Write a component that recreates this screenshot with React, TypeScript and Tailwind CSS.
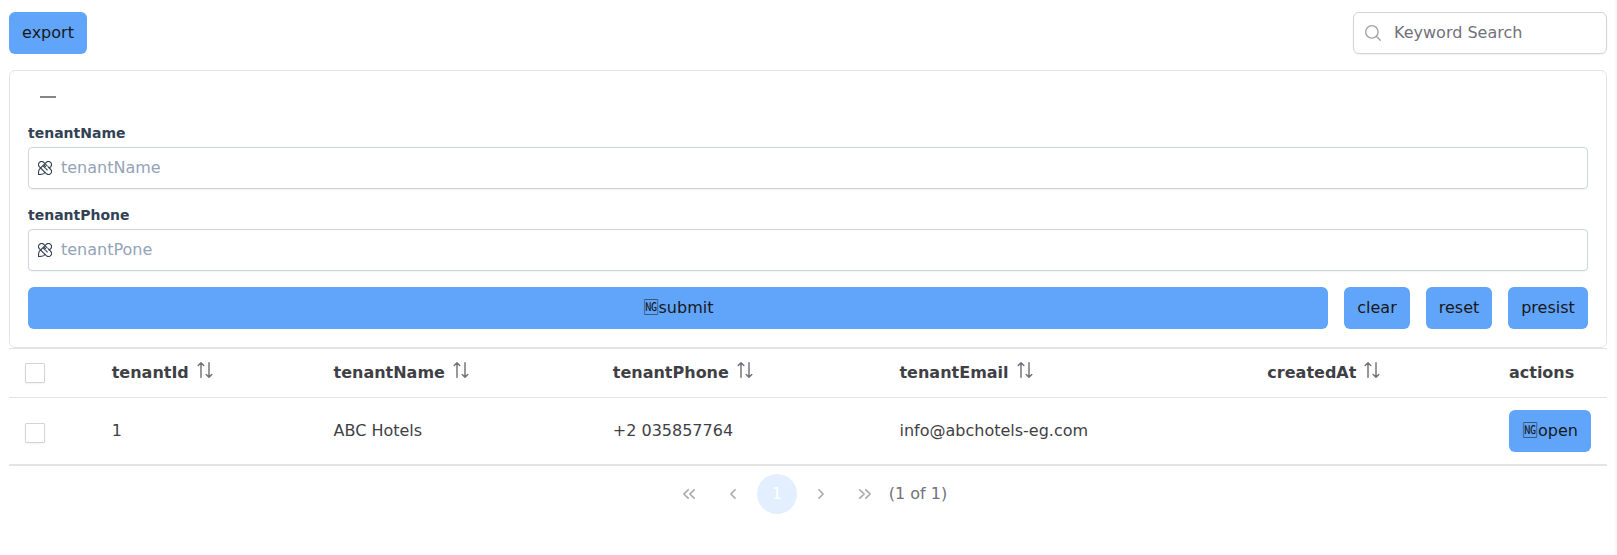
import React from 'react';

const Search = () => (
  <svg className="size-4 text-[#a1a1aa]" viewBox="0 0 14 14" fill="none" stroke="currentColor" strokeWidth="1.2" strokeLinecap="round">
    <circle cx="6.02" cy="6.02" r="5.42" />
    <path d="M9.9 9.9L13.4 13.4" />
  </svg>
);

const Sort = () => (
  <svg className="block size-4 shrink-0 text-[#71717a]" viewBox="0 0 16 16" fill="none" stroke="currentColor" strokeWidth="1.45" strokeLinecap="round" strokeLinejoin="round">
    <path d="M4 15.3V0.8M1.2 3.6L4 0.8L6.8 3.6M12 0.8V15.3M9.2 12.4L12 15.2L14.8 12.4" />
  </svg>
);

const Bandage = () => (
  <svg className="size-3.5 shrink-0 text-[#334155]" viewBox="0 0 14 14" fill="none" stroke="currentColor" strokeWidth="1.1" strokeLinecap="round" strokeLinejoin="round">
    <path d="M7 2.6L5.69 1.31A3.1 3.1 0 0 0 1.31 5.69L2.6 7L1.31 8.31C0.5 9.2 0.5 10 0.5 13.5C4 13.5 4.8 13.5 5.69 12.69L7 11.4L8.31 12.69A3.1 3.1 0 0 0 12.69 8.31L11.4 7L12.69 5.69A3.1 3.1 0 0 0 8.31 1.31Z" />
    <path d="M2.6 7L7 11.4M7 2.6L9 4.6M10 5.6L11.4 7M4.9 4.7L7 6.8M7.9 7.7L9.2 9M7 2.6L4.9 4.7L2.6 7M6.2 4.2L7.6 5.6" />
  </svg>
);

const Chevron = ({ double, right }: { double?: boolean; right?: boolean }) => (
  <span className="flex size-10 items-center justify-center text-[#a9a9af]">
    <svg className={right ? 'size-4 rotate-180' : 'size-4'} viewBox="0 0 16 16" fill="none" stroke="currentColor" strokeWidth="1.6" strokeLinecap="round" strokeLinejoin="round">
      {double ? <path d="M7.2 3.8L2.8 8L7.2 12.2M13.2 3.8L8.8 8L13.2 12.2" /> : <path d="M10.1 3.8L5.9 8L10.1 12.2" />}
    </svg>
  </span>
);

const Button = ({ children, ng, className = '' }: { children: React.ReactNode; ng?: boolean; className?: string }) => (
  <button className={`flex h-[42px] items-center justify-center rounded-md bg-[#60a5fa] px-[13px] text-[#18181b] ${className}`}>
    <span className="h-6">
      {ng && <span className="inline-block w-4 scale-x-95 font-['Noto_Sans_CJK_JP',sans-serif] leading-none">🆖</span>}
      {children}
    </span>
  </button>
);

const Field = ({ label, hint }: { label: string; hint: string }) => (
  <div className="mb-4 h-[66px]">
    <div className="h-6 text-sm font-bold leading-5 text-[#334155]">{label}</div>
    <div className="flex h-[42px] items-center rounded border border-[#cbd5e1] pl-[9px] text-[#94a3b8] shadow-[0_1px_2px_rgba(0,0,0,0.05)]">
      <Bandage />
      <span className="ml-[9px] pb-px">{hint}</span>
    </div>
  </div>
);

const Check = () => <span className="block size-5 rounded-[1px] border border-[#d4d4d8] shadow-[0_1px_2px_rgba(0,0,0,0.05)]" />;

const columns = ['tenantId', 'tenantName', 'tenantPhone', 'tenantEmail', 'createdAt'];
const row = ['1', 'ABC Hotels', '+2 035857764', 'info@abchotels-eg.com', ''];
const grid = 'grid grid-cols-[86.7px_221.8px_279.3px_286.7px_367.9px_241.6px_1fr] pl-4';

export default function App() {
  return (
    <div className="flex h-[555px] overflow-hidden bg-white font-['DejaVu_Sans',sans-serif] text-base leading-6 text-[#3f3f46]">
      <main className="flex w-[1607px] flex-col pl-[9px] pt-3">
        <div className="mb-4 flex justify-between">
          <Button className="w-[78px]">export</Button>
          <div className="flex h-[42px] w-[254px] items-center rounded-md border border-[#d4d4d8] pl-[11px] text-[#71717a] shadow-[0_1px_2px_rgba(0,0,0,0.05)]">
            <Search />
            <span className="ml-[13px] pb-px">Keyword Search</span>
          </div>
        </div>

        <section className="h-[278px] rounded-md border border-[#e4e4e7] px-[18px]">
          <div className="h-[52px] pl-3 pt-[25px]">
            <div className="h-0.5 w-4 bg-[#85858d]" />
          </div>
          <Field label="tenantName" hint="tenantName" />
          <Field label="tenantPhone" hint="tenantPone" />
          <div className="flex gap-4">
            <Button ng className="flex-1">submit</Button>
            <Button className="w-[66px]">clear</Button>
            <Button className="w-[66px]">reset</Button>
            <Button className="w-20">presist</Button>
          </div>
        </section>

        <div className={`${grid} h-[50px] items-center border-y border-[#e4e4e7] font-bold`}>
          <Check />
          {columns.map((name) => (
            <div key={name} className="flex items-center gap-2">
              <span>{name}</span>
              <span className="pb-1.5"><Sort /></span>
            </div>
          ))}
          <div>actions</div>
        </div>
        <div className={`${grid} h-[68px] items-center border-b-2 border-[#e4e4e7]`}>
          <div className="pt-1"><Check /></div>
          {row.map((value, i) => <div key={i}>{value}</div>)}
          <Button ng className="w-[82px]">open</Button>
        </div>

        <div className="mt-2 flex h-10 items-center justify-center gap-1 text-[#71717a]">
          <Chevron double />
          <Chevron />
          <span className="flex size-10 items-center justify-center rounded-full bg-[#e3efff] text-white">1</span>
          <Chevron right />
          <Chevron double right />
          <span>(1 of 1)</span>
        </div>
      </main>
      <div className="ml-auto w-0.5 bg-[#fafafa]" />
    </div>
  );
}
